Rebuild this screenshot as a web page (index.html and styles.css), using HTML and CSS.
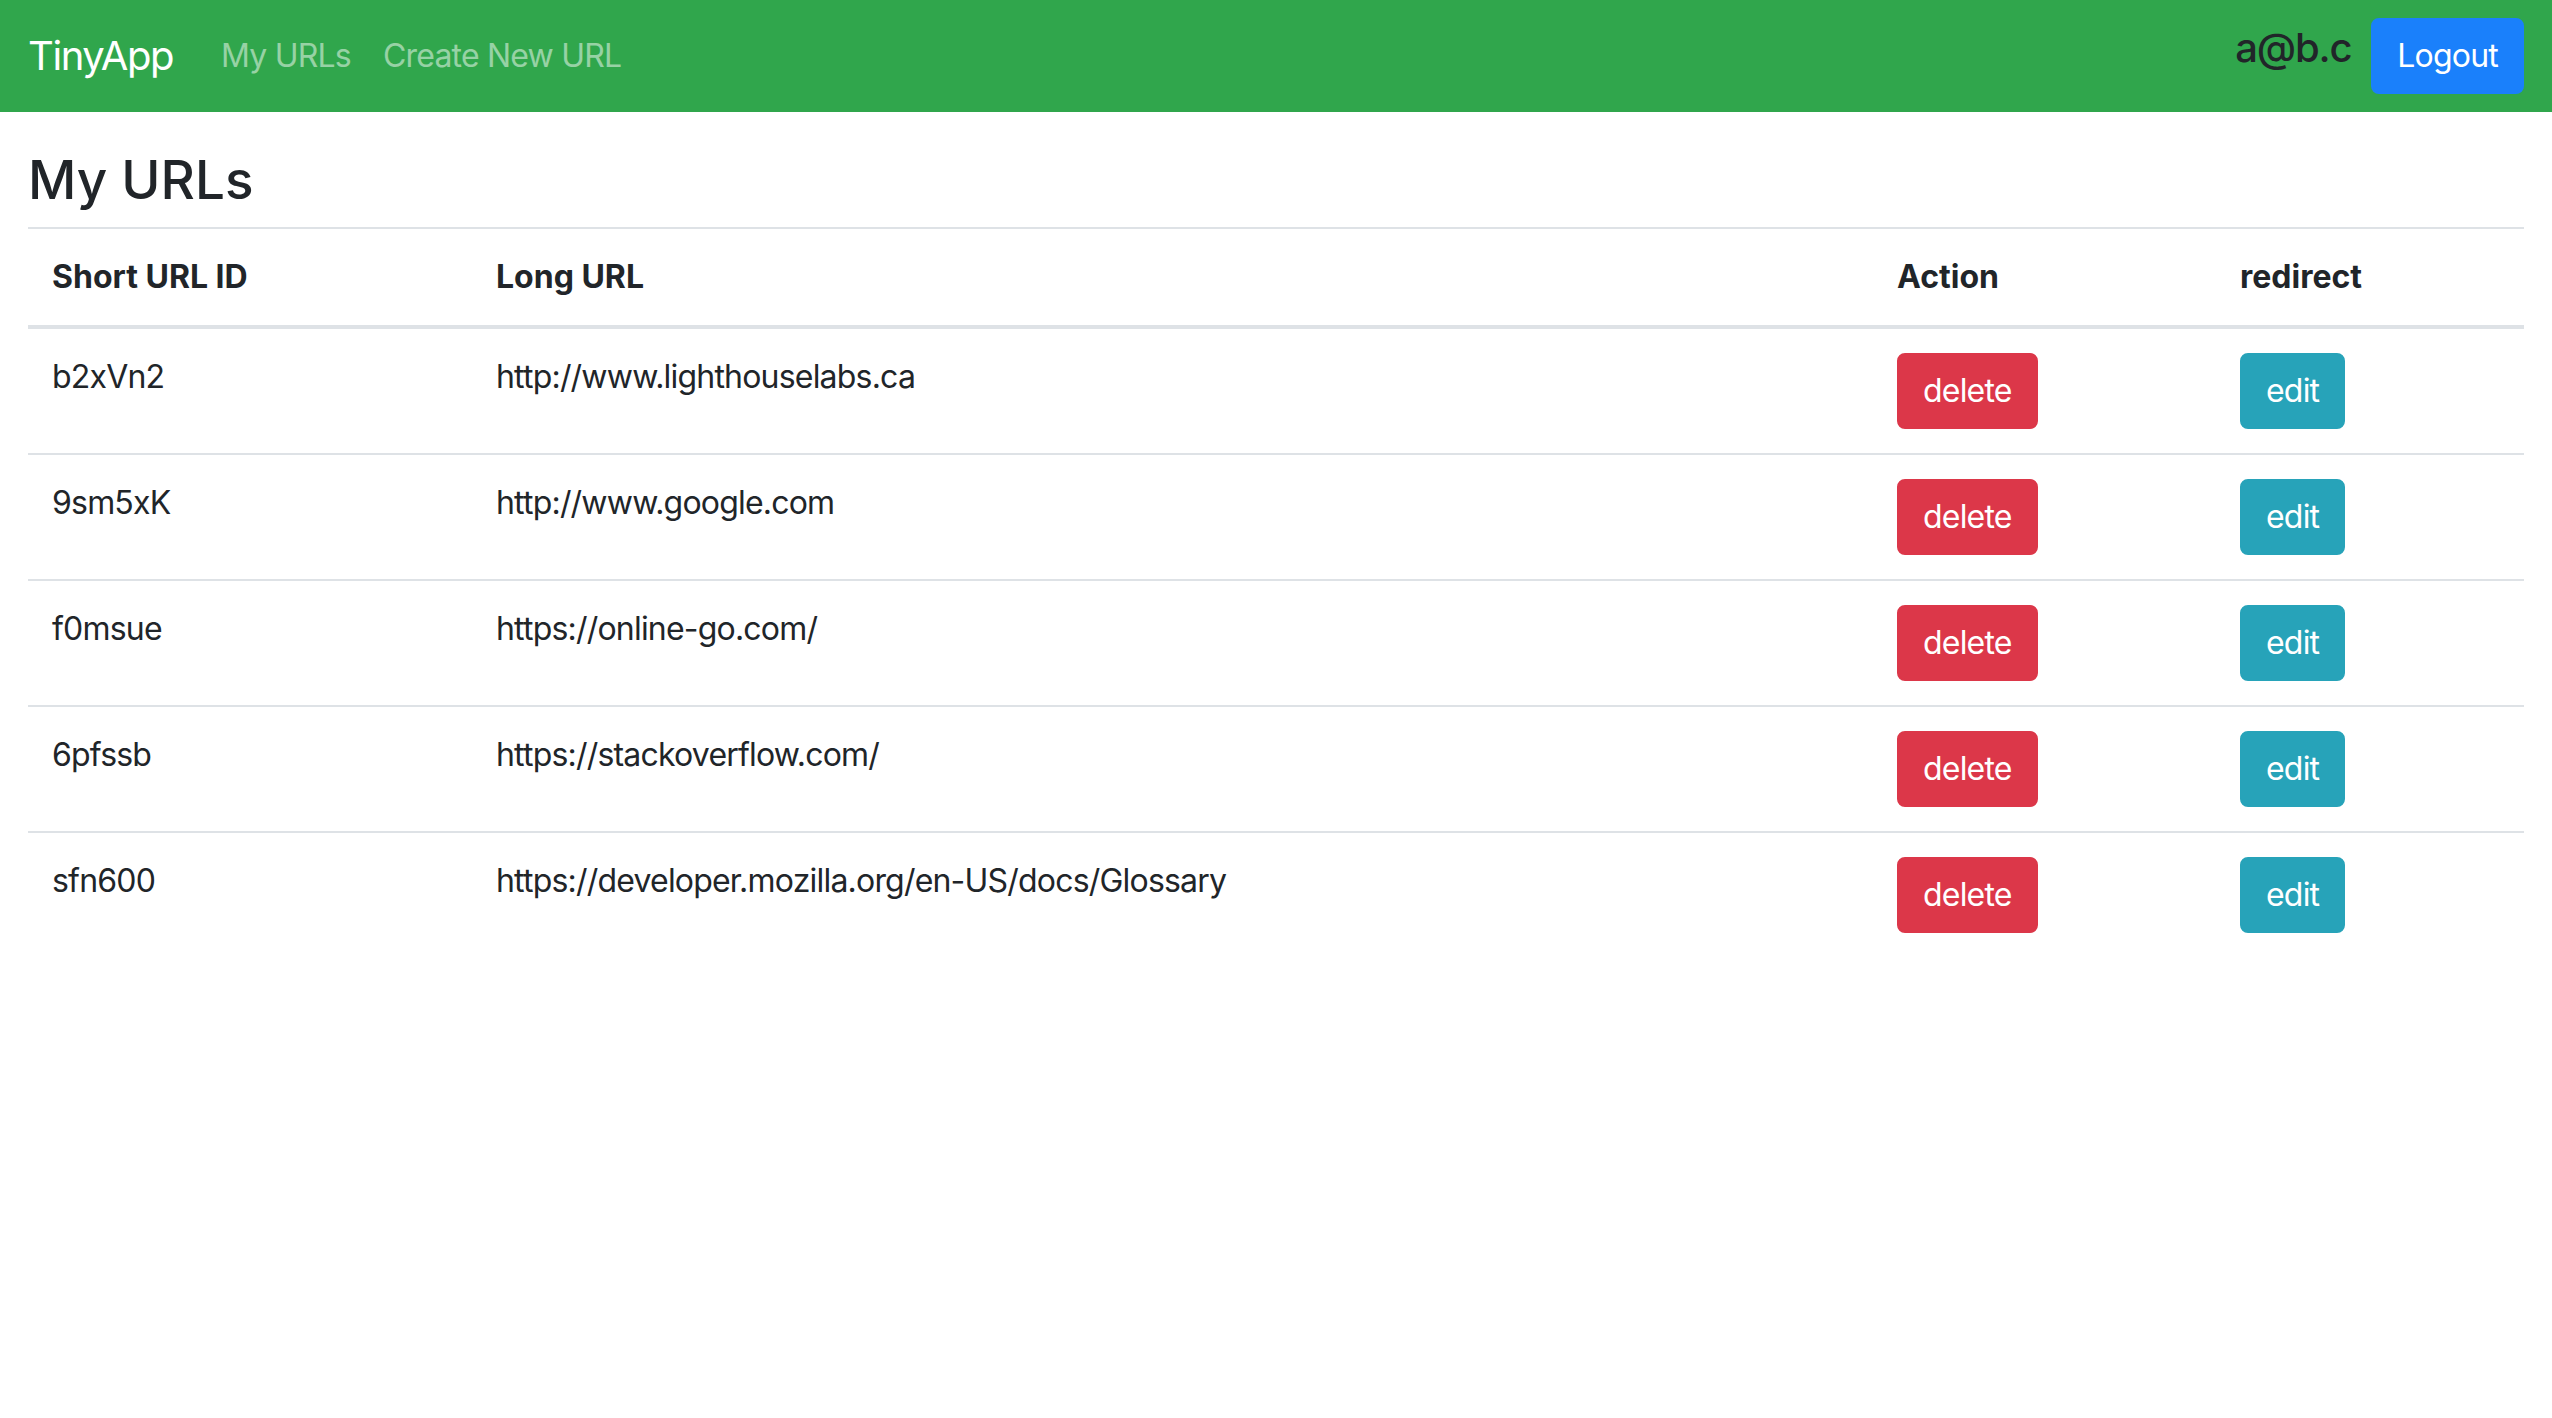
FILE: index.html
```html
<!DOCTYPE html>
<html lang="en">
<head>
<meta charset="utf-8">
<title>TinyApp</title>
<link rel="stylesheet" href="styles.css">
</head>
<body>
<nav class="navbar">
  <a class="brand" href="#">TinyApp</a>
  <div class="nav-links">
    <a class="nav-link" href="#">My URLs</a>
    <a class="nav-link" href="#">Create New URL</a>
  </div>
  <div class="nav-user">
    <h5 class="user-email">a@b.c</h5>
    <button class="btn btn-primary">Logout</button>
  </div>
</nav>
<main class="content">
  <h2 class="page-title">My URLs</h2>
  <table class="url-table">
    <colgroup>
      <col class="col-id">
      <col class="col-long">
      <col class="col-action">
      <col class="col-redirect">
    </colgroup>
    <thead>
      <tr><th>Short URL ID</th><th>Long URL</th><th>Action</th><th>redirect</th></tr>
    </thead>
    <tbody>
      <tr><td>b2xVn2</td><td>http://www.lighthouselabs.ca</td><td><button class="btn btn-danger">delete</button></td><td><button class="btn btn-info">edit</button></td></tr>
      <tr><td>9sm5xK</td><td>http://www.google.com</td><td><button class="btn btn-danger">delete</button></td><td><button class="btn btn-info">edit</button></td></tr>
      <tr><td>f0msue</td><td>https://online-go.com/</td><td><button class="btn btn-danger">delete</button></td><td><button class="btn btn-info">edit</button></td></tr>
      <tr><td>6pfssb</td><td>https://stackoverflow.com/</td><td><button class="btn btn-danger">delete</button></td><td><button class="btn btn-info">edit</button></td></tr>
      <tr><td>sfn600</td><td>https://developer.mozilla.org/en-US/docs/Glossary</td><td><button class="btn btn-danger">delete</button></td><td><button class="btn btn-info">edit</button></td></tr>
    </tbody>
  </table>
</main>
</body>
</html>
```
FILE: styles.css
```css
* { box-sizing: border-box; }
html, body { margin: 0; padding: 0; background: #fff; }
body {
  font-family: Inter, "Noto Sans", "Liberation Sans", sans-serif;
  font-size: 32px;
  line-height: 1.5;
  letter-spacing: -0.025em;
  color: #212529;
}
.navbar {
  display: flex;
  align-items: center;
  height: 112px;
  padding: 16px 28px;
  background: #30a64c;
}
.brand {
  font-size: 40px;
  line-height: 60px;
  padding: 10px 0;
  margin-right: 32px;
  letter-spacing: -0.035em;
  color: #fff;
  text-decoration: none;
  white-space: nowrap;
}
.nav-links { display: flex; }
.nav-link {
  padding: 16px 16px;
  line-height: 48px;
  color: rgba(255, 255, 255, 0.5);
  text-decoration: none;
}
.nav-user {
  margin-left: auto;
  display: flex;
  align-items: center;
}
.user-email {
  font-size: 40px;
  font-weight: 500;
  line-height: 48px;
  letter-spacing: -0.03em;
  margin: 0 20px 16px 0;
  color: #212529;
}
.btn {
  display: inline-block;
  vertical-align: top;
  font-family: inherit;
  font-size: 32px;
  line-height: 48px;
  letter-spacing: -0.025em;
  padding: 12px 24px;
  border: 2px solid transparent;
  border-radius: 8px;
  color: #fff;
  cursor: pointer;
}
.btn-primary { background: #1a80fb; border-color: #1a80fb; }
.btn-danger { background: #dc3749; border-color: #dc3749; }
.btn-info { background: #27a3b9; border-color: #27a3b9; }
.content { padding: 0 28px; }
.page-title {
  font-size: 53px;
  font-weight: 500;
  line-height: 67px;
  letter-spacing: 0;
  margin: 35px 0 13px 0;
}
.url-table {
  width: 100%;
  border-collapse: collapse;
  table-layout: fixed;
}
.col-id { width: 444px; }
.col-long { width: 1401px; }
.col-action { width: 343px; }
.col-redirect { width: 308px; }
.url-table th,
.url-table td {
  text-align: left;
  vertical-align: top;
  padding: 24px;
  border-top: 2px solid #dee2e6;
}
.url-table th {
  font-weight: 700;
  letter-spacing: 0;
  border-bottom: 4px solid #dee2e6;
}
```
